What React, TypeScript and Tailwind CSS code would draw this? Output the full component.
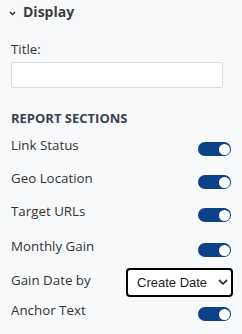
import React, { useState } from 'react';

const Toggle: React.FC<{ on: boolean; onChange: () => void }> = ({ on, onChange }) => (
  <button
    onClick={onChange}
    className={`mt-[6px] flex h-[14px] w-[33px] items-center rounded-full px-[1.5px] ${
      on ? 'justify-end bg-[#0c4288]' : 'justify-start bg-gray-300'
    }`}
  >
    <span className="block h-[11px] w-[11px] rounded-full bg-white" />
  </button>
);

const App: React.FC = () => {
  const [sections, setSections] = useState({
    linkStatus: true,
    geoLocation: true,
    targetUrls: true,
    monthlyGain: true,
    anchorText: true,
  });

  const flip = (key: keyof typeof sections) =>
    setSections((s) => ({ ...s, [key]: !s[key] }));

  const rows: { key: keyof typeof sections; label: string; h: string }[] = [
    { key: 'linkStatus', label: 'Link Status', h: 'h-[33px]' },
    { key: 'geoLocation', label: 'Geo Location', h: 'h-[33px]' },
    { key: 'targetUrls', label: 'Target URLs', h: 'h-[35px]' },
    { key: 'monthlyGain', label: 'Monthly Gain', h: 'h-[31px]' },
  ];

  return (
    <div className="h-[334px] w-[242px] bg-[#f8f9fa] font-['Open_Sans',sans-serif] text-[#333]">
      <div className="flex items-center gap-[7px] pl-[9px] pt-[2px]">
        <svg width="7" height="5" viewBox="0 0 7 5" className="mt-[2px]">
          <path d="M1 1 L3.5 3.5 L6 1" fill="none" stroke="#333" strokeWidth="1.5" />
        </svg>
        <span className="text-[14px] font-bold leading-[20px] text-[#3d3d3d]">Display</span>
      </div>

      <div className="px-[11px]">
        <label className="mt-[18px] block text-[13.33px] leading-[18px]">Title:</label>
        <input
          type="text"
          className="mt-[4px] block h-[26px] w-[212px] rounded-[2px] border border-[#dcdcdc] bg-white px-2 text-[13px]"
        />

        <div className="mt-[22px] text-[13px] font-bold leading-[17px] text-[#3a4150]">
          REPORT SECTIONS
        </div>

        <div className="mt-[9px]">
          {rows.map((r) => (
            <div key={r.key} className={`flex items-start justify-between ${r.h}`}>
              <span className="text-[13.33px] leading-[18px]">{r.label}</span>
              <Toggle on={sections[r.key]} onChange={() => flip(r.key)} />
            </div>
          ))}

          <div className="flex h-[33px] items-start justify-between">
            <span className="mt-[3px] text-[13.33px] leading-[18px]">Gain Date by</span>
            <div className="relative -mr-[2px]">
              <select
                defaultValue="create"
                className="block h-[29px] w-[107px] appearance-none rounded-[4px] border-2 border-black bg-white pl-[9px] font-['Liberation_Sans',sans-serif] text-[13px] text-[#222]"
              >
                <option value="create">Create Date</option>
                <option value="gain">Gain Date</option>
              </select>
              <svg
                width="10"
                height="6"
                viewBox="0 0 10 6"
                className="pointer-events-none absolute right-[5px] top-[11px]"
              >
                <path d="M1 1 L5 4.8 L9 1" fill="none" stroke="#333" strokeWidth="1.8" />
              </svg>
            </div>
          </div>

          <div className="flex items-start justify-between">
            <span className="text-[13.33px] leading-[18px]">Anchor Text</span>
            <Toggle on={sections.anchorText} onChange={() => flip('anchorText')} />
          </div>
        </div>
      </div>
    </div>
  );
};

export default App;
